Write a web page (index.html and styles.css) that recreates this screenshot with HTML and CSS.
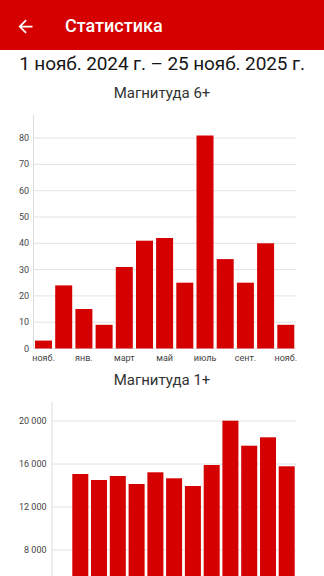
FILE: index.html
```html
<!DOCTYPE html>
<html lang="ru">
<head>
<meta charset="utf-8">
<link rel="stylesheet" href="styles.css">
</head>
<body>
<header class="appbar">
  <svg class="back" viewBox="0 0 24 24" width="21" height="21"><path d="M20 11H7.83l5.59-5.59L12 4l-8 8 8 8 1.41-1.41L7.83 13H20v-2z" fill="#fff"/></svg>
  <h1 class="appbar-title">Статистика</h1>
</header>
<div class="range">1 нояб. 2024 г. – 25 нояб. 2025 г.</div>
<div class="chart-title t1">Магнитуда 6+</div>
<svg class="chart c1" viewBox="0 109 324 261" width="324" height="261">
  <g class="grid">
    <line x1="33.5" y1="348.5" x2="296" y2="348.5"/>
    <line x1="33.5" y1="322.2" x2="296" y2="322.2"/>
    <line x1="33.5" y1="295.9" x2="296" y2="295.9"/>
    <line x1="33.5" y1="269.6" x2="296" y2="269.6"/>
    <line x1="33.5" y1="243.3" x2="296" y2="243.3"/>
    <line x1="33.5" y1="217.0" x2="296" y2="217.0"/>
    <line x1="33.5" y1="190.7" x2="296" y2="190.7"/>
    <line x1="33.5" y1="164.4" x2="296" y2="164.4"/>
    <line x1="33.5" y1="138.1" x2="296" y2="138.1"/>
    <line class="axis" x1="33.5" y1="115" x2="33.5" y2="348.5"/>
  </g>
  <g class="ylab">
    <text x="29" y="348.5">0</text>
    <text x="29" y="322.2">10</text>
    <text x="29" y="295.9">20</text>
    <text x="29" y="269.6">30</text>
    <text x="29" y="243.3">40</text>
    <text x="29" y="217.0">50</text>
    <text x="29" y="190.7">60</text>
    <text x="29" y="164.4">70</text>
    <text x="29" y="138.1">80</text>
  </g>
  <g class="bars">
    <rect x="35.0" y="340.6" width="17" height="7.9"/>
    <rect x="55.2" y="285.4" width="17" height="63.1"/>
    <rect x="75.4" y="309.0" width="17" height="39.5"/>
    <rect x="95.6" y="324.8" width="17" height="23.7"/>
    <rect x="115.8" y="267.0" width="17" height="81.5"/>
    <rect x="136.0" y="240.7" width="17" height="107.8"/>
    <rect x="156.1" y="238.0" width="17" height="110.5"/>
    <rect x="176.3" y="282.7" width="17" height="65.8"/>
    <rect x="196.5" y="135.5" width="17" height="213.0"/>
    <rect x="216.7" y="259.1" width="17" height="89.4"/>
    <rect x="236.9" y="282.7" width="17" height="65.8"/>
    <rect x="257.1" y="243.3" width="17" height="105.2"/>
    <rect x="277.3" y="324.8" width="17" height="23.7"/>
  </g>
  <g class="xlab">
    <text x="43.5" y="358">нояб.</text>
    <text x="83.9" y="358">янв.</text>
    <text x="124.3" y="358">март</text>
    <text x="164.6" y="358">май</text>
    <text x="205.0" y="358">июль</text>
    <text x="245.4" y="358">сент.</text>
    <text x="285.8" y="358">нояб.</text>
  </g>
</svg>
<div class="chart-title t2">Магнитуда 1+</div>
<svg class="chart c2" viewBox="0 390 324 186" width="324" height="186">
  <g class="grid">
    <line x1="52" y1="550" x2="296" y2="550"/>
    <line x1="52" y1="507" x2="296" y2="507"/>
    <line x1="52" y1="464" x2="296" y2="464"/>
    <line x1="52" y1="421" x2="296" y2="421"/>
    <line class="axis" x1="52" y1="402" x2="52" y2="576"/>
  </g>
  <g class="ylab">
    <text x="46.5" y="550">8 000</text>
    <text x="46.5" y="507">12 000</text>
    <text x="46.5" y="464">16 000</text>
    <text x="46.5" y="421">20 000</text>
  </g>
  <g class="bars">
    <rect x="72.3" y="474" width="16" height="102"/>
    <rect x="91.0" y="480" width="16" height="96"/>
    <rect x="109.8" y="476" width="16" height="100"/>
    <rect x="128.6" y="484" width="16" height="92"/>
    <rect x="147.4" y="472.3" width="16" height="103.7"/>
    <rect x="166.1" y="478.3" width="16" height="97.7"/>
    <rect x="184.9" y="486" width="16" height="90"/>
    <rect x="203.7" y="465" width="16" height="111"/>
    <rect x="222.4" y="420.7" width="16" height="155.3"/>
    <rect x="241.2" y="445.7" width="16" height="130.3"/>
    <rect x="260.0" y="437.3" width="16" height="138.7"/>
    <rect x="278.7" y="466.3" width="16" height="109.7"/>
  </g>
</svg>
</body>
</html>
```
FILE: styles.css
```css
html, body {
  margin: 0;
  padding: 0;
  background: #fff;
  font-family: Roboto, "Noto Sans", sans-serif;
  color: #1f1f1f;
}
body {
  width: 324px;
  height: 576px;
  overflow: hidden;
}
.appbar {
  height: 50px;
  background: #d50000;
  display: flex;
  align-items: center;
  padding-left: 15px;
  box-sizing: border-box;
}
.back {
  display: block;
  margin-top: 2px;
}
.appbar-title {
  margin: 0 0 0 29px;
  font-size: 18px;
  font-weight: 500;
  color: #fff;
  line-height: 24px;
  padding-top: 2px;
}
.range {
  height: 28px;
  line-height: 28px;
  font-size: 19px;
  letter-spacing: -0.1px;
  text-align: center;
  color: #161616;
}
.chart-title {
  text-align: center;
  font-size: 15px;
  color: #333;
}
.t1 {
  height: 31px;
  line-height: 31px;
}
.t2 {
  height: 20px;
  line-height: 20px;
}
.chart {
  display: block;
}
.grid line {
  stroke: #e2e2e2;
  stroke-width: 1;
}
.grid .axis {
  stroke: #dcdcdc;
}
.ylab text {
  font-family: Roboto, sans-serif;
  font-size: 9px;
  fill: #444;
  text-anchor: end;
  dominant-baseline: central;
}
.xlab text {
  font-family: Roboto, sans-serif;
  font-size: 9px;
  fill: #444;
  text-anchor: middle;
  dominant-baseline: central;
}
.bars rect {
  fill: #d50000;
}
```
